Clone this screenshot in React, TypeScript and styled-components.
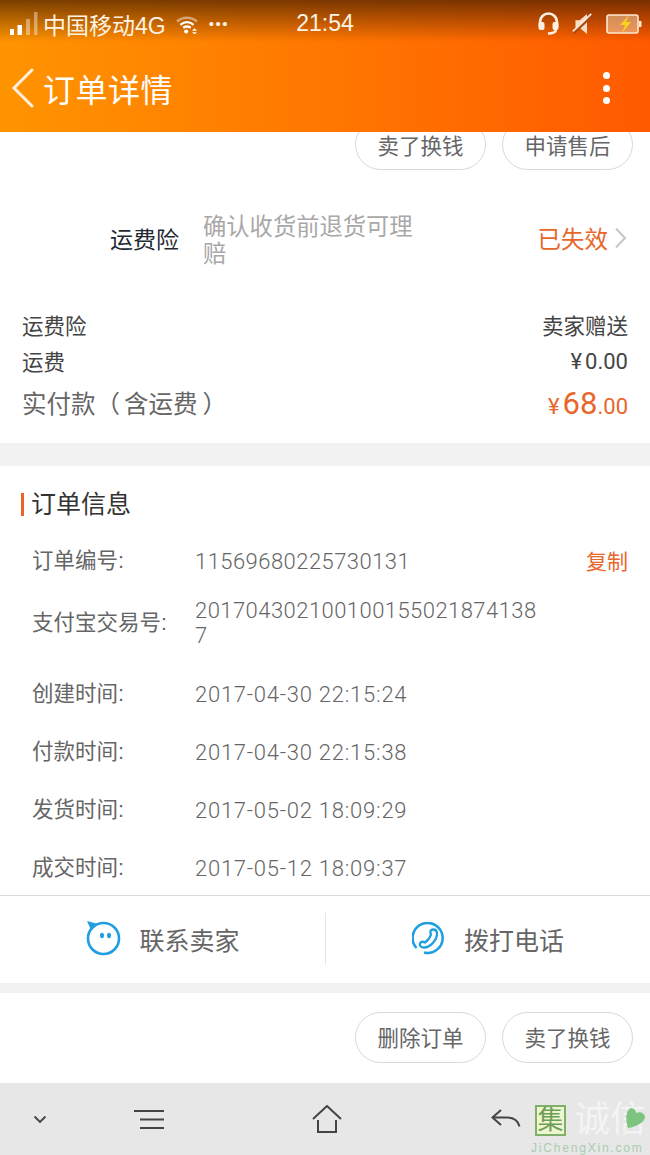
import React from 'react';
import styled, {createGlobalStyle} from 'styled-components';

const GlobalStyle = createGlobalStyle`
  html, body {
    margin: 0;
    padding: 0;
    background: #fff;
  }
  * {
    box-sizing: border-box;
  }
`;

const FONT = '"Liberation Sans", "Noto Sans CJK SC", sans-serif';
const DIGITS = 'Roboto, "Noto Sans CJK SC", sans-serif';
const ORANGE = '#e8662a';

const Page = styled.div`
  position: relative;
  width: 650px;
  height: 1155px;
  display: flex;
  flex-direction: column;
  overflow: hidden;
  font-family: ${FONT};
  background: #fff;
`;

const Header = styled.header`
  position: relative;
  height: 132px;
  flex: none;
  background: linear-gradient(90deg, #ff9400 0%, #ff7a00 45%, #ff5a00 100%);
  color: #fff;
`;

const StatusShade = styled.div`
  position: absolute;
  top: 0;
  left: 0;
  right: 0;
  height: 42px;
  background: linear-gradient(180deg, rgba(70, 30, 0, 0.72) 0%, rgba(70, 30, 0, 0) 100%);
`;

const StatusBar = styled.div`
  position: relative;
  height: 44px;
  padding: 3px 10px 0 10px;
  display: flex;
  align-items: center;
  font-size: 23px;
  color: #fdf3e4;
`;

const StatusLeft = styled.div`
  display: flex;
  align-items: center;
  width: 258px;
`;

const Carrier = styled.span`
  margin: 0 9px 0 5px;
  white-space: nowrap;
`;

const MoreDots = styled.span`
  margin-left: 10px;
  font-size: 15px;
  letter-spacing: 1.5px;
  white-space: nowrap;
`;

const Clock = styled.span`
  font-size: 23px;
  width: 114px;
  text-align: center;
`;

const StatusRight = styled.div`
  flex: 1;
  display: flex;
  justify-content: flex-end;
  align-items: center;
  gap: 12px;
  margin-right: -2px;
`;

const NavBar = styled.div`
  height: 88px;
  padding: 0 40px 0 11px;
  display: flex;
  align-items: center;
`;

const Title = styled.h1`
  margin: 0 0 0 8px;
  flex: 1;
  font-size: 32px;
  font-weight: 400;
  letter-spacing: 0.5px;
`;

const Dots = styled.div`
  display: flex;
  flex-direction: column;
  gap: 5.500px;
`;

const Dot = styled.span`
  width: 7px;
  height: 7px;
  border-radius: 50%;
  background: #fff;
`;

const Scroller = styled.main`
  flex: 1;
  min-height: 0;
  overflow: hidden;
  display: flex;
  flex-direction: column;
`;

const ActionRow = styled.div<{$offset?: number; $height?: number}>`
  flex: none;
  height: ${p => p.$height ?? 90}px;
  margin-top: ${p => p.$offset ?? 0}px;
  padding: 0 17px ${p => (p.$height ? 0 : 2)}px 0;
  display: flex;
  justify-content: flex-end;
  align-items: center;
  gap: 16px;
  background: #fff;
`;

const PillButton = styled.button`
  width: 131px;
  height: 51px;
  padding: 0 0 1px;
  background: #fff;
  border: 1px solid #d8d8d8;
  border-radius: 26px;
  font-family: ${FONT};
  font-size: 21.500px;
  color: #666;
`;

const Insurance = styled.div`
  flex: none;
  height: 135px;
  padding: 7px 23px 0 110px;
  display: flex;
  align-items: center;
`;

const InsuranceName = styled.span`
  width: 93px;
  margin-bottom: 6px;
  font-size: 23px;
  color: #1f2a33;
  white-space: nowrap;
`;

const InsuranceDesc = styled.span`
  width: 222px;
  font-size: 23.300px;
  line-height: 27px;
  color: #a8a8a8;
`;

const InsuranceState = styled.span`
  margin: 0 0 6px auto;
  display: flex;
  align-items: center;
  gap: 6px;
  font-size: 23.500px;
  color: ${ORANGE};
`;

const Costs = styled.div`
  flex: none;
  height: 161px;
  padding: 1px 22px 0;
  border-bottom: 23px solid #f2f2f2;
`;

const CostRow = styled.div<{$height: number}>`
  height: ${p => p.$height}px;
  display: flex;
  justify-content: space-between;
  align-items: center;
  font-size: 21.500px;
  color: #444;
`;

const TotalLabel = styled.span`
  font-size: 24.500px;
  color: #666;
`;

const OpenParen = styled.span`
  margin-right: 4px;
`;

const CloseParen = styled.span`
  margin-left: 5px;
`;

const Money = styled.span`
  margin-top: 3px;
  font-family: ${DIGITS};
  font-size: 22px;
  color: #444;
`;

const Yen = styled.span`
  margin-right: 3px;
`;

const Total = styled.span`
  display: flex;
  align-items: baseline;
  margin-top: 3px;
  font-family: ${DIGITS};
  font-size: 22px;
  color: ${ORANGE};
`;

const TotalMain = styled.span`
  font-size: 31px;
`;

const OrderInfo = styled.section`
  flex: 1;
  min-height: 0;
  padding: 19px 22px 0;
  overflow: hidden;
`;

const SectionTitle = styled.h2`
  margin: 0 0 17px;
  height: 34px;
  display: flex;
  align-items: center;
  font-size: 25px;
  font-weight: 400;
  color: #333;
`;

const TitleMark = styled.span`
  width: 3px;
  height: 23px;
  margin: 4px 7px 0 -1px;
  background: ${ORANGE};
`;

const InfoRow = styled.div<{$height: number}>`
  height: ${p => p.$height}px;
  padding-left: 10px;
  display: flex;
  align-items: center;
  font-size: 21.500px;
  line-height: 25px;
  color: #666;
`;

const InfoLabel = styled.span`
  width: 163px;
  flex: none;
  white-space: nowrap;
`;

const InfoValue = styled.span<{$spacing: number}>`
  width: 350px;
  flex: none;
  font-family: ${DIGITS};
  font-size: 22px;
  font-weight: 300;
  letter-spacing: ${p => p.$spacing}px;
  word-break: break-all;
`;

const CopyLink = styled.span`
  margin-left: auto;
  font-size: 21px;
  color: ${ORANGE};
`;

const TimeRows = styled.div`
  margin-top: 5px;
`;

const ContactBar = styled.div`
  flex: none;
  height: 98px;
  display: flex;
  align-items: stretch;
  border-top: 1px solid #d9d9d9;
  border-bottom: 10px solid #f2f2f2;
`;

const ContactButton = styled.div<{$divider?: boolean}>`
  flex: 1;
  display: flex;
  align-items: center;
  justify-content: center;
  gap: 18px;
  padding: 0 0 2px 1px;
  font-size: 25px;
  color: #666;
  position: relative;
  ${p => p.$divider && `
    &::before {
      content: '';
      position: absolute;
      left: 0;
      top: 17px;
      bottom: 18px;
      width: 1px;
      background: #e6e6e6;
    }
  `}
`;

const SystemBar = styled.nav`
  position: relative;
  flex: none;
  height: 72px;
  display: grid;
  grid-template-columns: 80px 138px 218px 140px;
  justify-items: center;
  align-items: center;
  background: #e7e7e7;
`;

const Watermark = styled.div`
  position: absolute;
  right: 0;
  bottom: 0;
  width: 118px;
  height: 72px;
`;

const WatermarkRow = styled.div`
  display: flex;
  align-items: center;
  height: 54px;
  padding-left: 3px;
  margin-top: 10px;
`;

const SealChar = styled.span`
  width: 31px;
  height: 31px;
  display: flex;
  align-items: center;
  justify-content: center;
  border: 2px solid #7fb069;
  background: #eef6cf;
  color: #6f9e58;
  font-size: 26px;
  line-height: 1;
`;

const GhostChar = styled.span`
  margin-left: 8px;
  color: #f4f4f4;
  font-size: 36px;
  line-height: 1;
  white-space: nowrap;
`;

const WatermarkUrl = styled.div`
  font-size: 12px;
  line-height: 12px;
  letter-spacing: 1.800px;
  color: #a9cdb0;
  white-space: nowrap;
  margin-left: -1px;
  margin-top: -5px;
`;

const LeafMark = styled.svg`
  position: absolute;
  right: 0;
  top: 22px;
`;

const SignalIcon = () => (
    <svg width="28" height="24" viewBox="0 0 28 24">
        <rect x="0" y="17" width="4" height="6" fill="#fff"/>
        <rect x="7.500" y="13" width="4.500" height="10" fill="#fff"/>
        <rect x="16" y="7" width="4" height="16" fill="#fff" opacity="0.4"/>
        <rect x="24" y="0" width="3.500" height="23" fill="#fff" opacity="0.4"/>
    </svg>
);

const WifiIcon = () => (
    <svg width="24" height="20" viewBox="0 0 28 24" fill="none" stroke="#fff" strokeWidth="2.800">
        <path d="M2 9c7-6 17-6 24 0" opacity="0.45"/>
        <path d="M6 13c5-4 11-4 16 0"/>
        <path d="M9.500 16.500c3-2 6-2 9 0"/>
        <circle cx="13" cy="21" r="2.500" fill="#fff" stroke="none"/>
        <path d="M20 20h6l-3-3zM20 22h6l-3 2.500z" fill="#fff" stroke="none"/>
    </svg>
);

const HeadsetIcon = () => (
    <svg width="23" height="24" viewBox="0 0 23 24" fill="none" stroke="#fdf0e2" strokeWidth="2.600">
        <path d="M3 15V10a8.500 8.500 0 0 1 17 0v5"/>
        <rect x="1.500" y="10" width="6" height="8" rx="2" fill="#fdf0e2" stroke="none"/>
        <rect x="15.500" y="10" width="6" height="8" rx="2" fill="#fdf0e2" stroke="none"/>
        <path d="M19 17c0 3-3 4.500-8 4.500"/>
    </svg>
);

const MuteIcon = () => (
    <svg width="22" height="22" viewBox="0 0 24 24" fill="none">
        <path d="M2 8h5l9-7v22l-9-7H2z" fill="#fbe6d2" opacity="0.95" transform="translate(2 0) scale(0.9 1)"/>
        <path d="M2 22L22 3" stroke="#a84a10" strokeWidth="2.500"/>
        <path d="M1 20L21 1" stroke="#fbe6d2" strokeWidth="2"/>
    </svg>
);

const BatteryIcon = () => (
    <svg width="36" height="22" viewBox="0 0 36 22" fill="none">
        <rect x="1" y="2" width="31" height="18" rx="2" stroke="#fde8d4" strokeWidth="1.600" fill="rgba(255,235,200,0.45)"/>
        <rect x="33" y="8" width="2.500" height="6" fill="#fbe6d2"/>
        <path d="M23 2l-9 10h5l-3 8 9-11h-5z" fill="#f9d21c"/>
    </svg>
);

const BackIcon = () => (
    <svg width="24" height="40" viewBox="0 0 24 40" fill="none" stroke="#fdeedd" strokeWidth="3" strokeLinecap="round">
        <path d="M21 2L3 20l18 18"/>
    </svg>
);

const ChevronIcon = () => (
    <svg width="13" height="22" viewBox="0 0 13 22" fill="none" stroke="#c8c8c8" strokeWidth="2.200">
        <path d="M2 1.500L11 11l-9 9.500"/>
    </svg>
);

const SmileIcon = () => (
    <svg width="35" height="35" viewBox="0 0 35 35" fill="none">
        <circle cx="17.500" cy="17.500" r="15.500" stroke="#1f9fe0" strokeWidth="2.600"/>
        <path d="M1 0l11 3-7 6z" fill="#1f9fe0"/>
        <ellipse cx="16" cy="14.500" rx="2" ry="2.800" fill="#1f9fe0"/>
        <ellipse cx="23" cy="14.500" rx="2" ry="2.800" fill="#1f9fe0"/>
    </svg>
);

const PhoneIcon = () => (
    <svg width="34" height="34" viewBox="0 0 34 34" fill="none" stroke="#1f9fe0" strokeWidth="2.600">
        <path d="M12 30.500A15 15 0 1 0 4.500 26"/>
        <path d="M21 7.500c3 0 4 2 4 4 0 7-7 14-13 14-3 0-5-2-4-4 1-2 3-2 5-1 3-2 5-5 6-8-1-2-1-5 2-5z" strokeWidth="2.300"/>
    </svg>
);

const CaretIcon = () => (
    <svg width="14" height="9" viewBox="0 0 14 9" fill="none" stroke="#444" strokeWidth="1.900">
        <path d="M1.500 1.500L7 7l5.500-5.500"/>
    </svg>
);

const MenuIcon = () => (
    <svg width="30" height="19" viewBox="0 0 30 19" fill="none" stroke="#444" strokeWidth="2">
        <path d="M0 1h30M6 9.500h24M6 18h24"/>
    </svg>
);

const HomeIcon = () => (
    <svg width="30" height="28" viewBox="0 0 30 28" fill="none" stroke="#444" strokeWidth="2">
        <path d="M1 14L15 1l14 13"/>
        <path d="M6 15v12h18V15"/>
    </svg>
);

const ReturnIcon = () => (
    <svg width="30" height="20" viewBox="0 0 30 20" fill="none" stroke="#444" strokeWidth="2">
        <path d="M10 1L1.500 8.500 10 16"/>
        <path d="M2 8.500h14c7 0 11 3 12.500 9"/>
    </svg>
);

const infoRows = [
    {label: '创建时间:', value: '2017-04-30 22:15:24'},
    {label: '付款时间:', value: '2017-04-30 22:15:38'},
    {label: '发货时间:', value: '2017-05-02 18:09:29'},
    {label: '成交时间:', value: '2017-05-12 18:09:37'},
];

export default function App() {
    return (
        <Page>
            <GlobalStyle/>
            <Header>
                <StatusShade/>
                <StatusBar>
                    <StatusLeft>
                        <SignalIcon/>
                        <Carrier>中国移动4G</Carrier>
                        <WifiIcon/>
                        <MoreDots>•••</MoreDots>
                    </StatusLeft>
                    <Clock>21:54</Clock>
                    <StatusRight>
                        <HeadsetIcon/>
                        <MuteIcon/>
                        <BatteryIcon/>
                    </StatusRight>
                </StatusBar>
                <NavBar>
                    <BackIcon/>
                    <Title>订单详情</Title>
                    <Dots>
                        <Dot/>
                        <Dot/>
                        <Dot/>
                    </Dots>
                </NavBar>
            </Header>
            <Scroller>
                <ActionRow $offset={-13} $height={51}>
                    <PillButton>卖了换钱</PillButton>
                    <PillButton>申请售后</PillButton>
                </ActionRow>
                <Insurance>
                    <InsuranceName>运费险</InsuranceName>
                    <InsuranceDesc>确认收货前退货可理赔</InsuranceDesc>
                    <InsuranceState>已失效<ChevronIcon/></InsuranceState>
                </Insurance>
                <Costs>
                    <CostRow $height={36}><span>运费险</span><span>卖家赠送</span></CostRow>
                    <CostRow $height={36}><span>运费</span><Money><Yen>¥</Yen>0.00</Money></CostRow>
                    <CostRow $height={48}>
                        <TotalLabel>实付款<OpenParen>（</OpenParen>含运费<CloseParen>）</CloseParen></TotalLabel>
                        <Total><Yen>¥</Yen><TotalMain>68</TotalMain>.00</Total>
                    </CostRow>
                </Costs>
                <OrderInfo>
                    <SectionTitle><TitleMark/>订单信息</SectionTitle>
                    <InfoRow $height={50}>
                        <InfoLabel>订单编号:</InfoLabel>
                        <InfoValue $spacing={0.45}>11569680225730131</InfoValue>
                        <CopyLink>复制</CopyLink>
                    </InfoRow>
                    <InfoRow $height={74}>
                        <InfoLabel>支付宝交易号:</InfoLabel>
                        <InfoValue $spacing={0.45}>2017043021001001550218741387</InfoValue>
                    </InfoRow>
                    <TimeRows>
                        {infoRows.map(row => (
                            <InfoRow key={row.label} $height={58}>
                                <InfoLabel>{row.label}</InfoLabel>
                                <InfoValue $spacing={0.75}>{row.value}</InfoValue>
                            </InfoRow>
                        ))}
                    </TimeRows>
                </OrderInfo>
                <ContactBar>
                    <ContactButton><SmileIcon/>联系卖家</ContactButton>
                    <ContactButton $divider><PhoneIcon/>拨打电话</ContactButton>
                </ContactBar>
                <ActionRow>
                    <PillButton>删除订单</PillButton>
                    <PillButton>卖了换钱</PillButton>
                </ActionRow>
            </Scroller>
            <SystemBar>
                <CaretIcon/>
                <MenuIcon/>
                <HomeIcon/>
                <ReturnIcon/>
                <Watermark>
                    <WatermarkRow>
                        <SealChar>集</SealChar>
                        <GhostChar>诚信</GhostChar>
                    </WatermarkRow>
                    <WatermarkUrl>JiChengXin.com</WatermarkUrl>
                    <LeafMark width="30" height="34" viewBox="0 0 30 34" fill="none">
                        <path d="M8 23C5 14 6 5 11 3c4 0 5 4 5 5 3-2 9 0 9 4 0 5-9 10-17 11z" fill="#7cc47f"/>
                        <path d="M8 23L0 32" stroke="#e3efe0" strokeWidth="1.500"/>
                    </LeafMark>
                </Watermark>
            </SystemBar>
        </Page>
    );
}
